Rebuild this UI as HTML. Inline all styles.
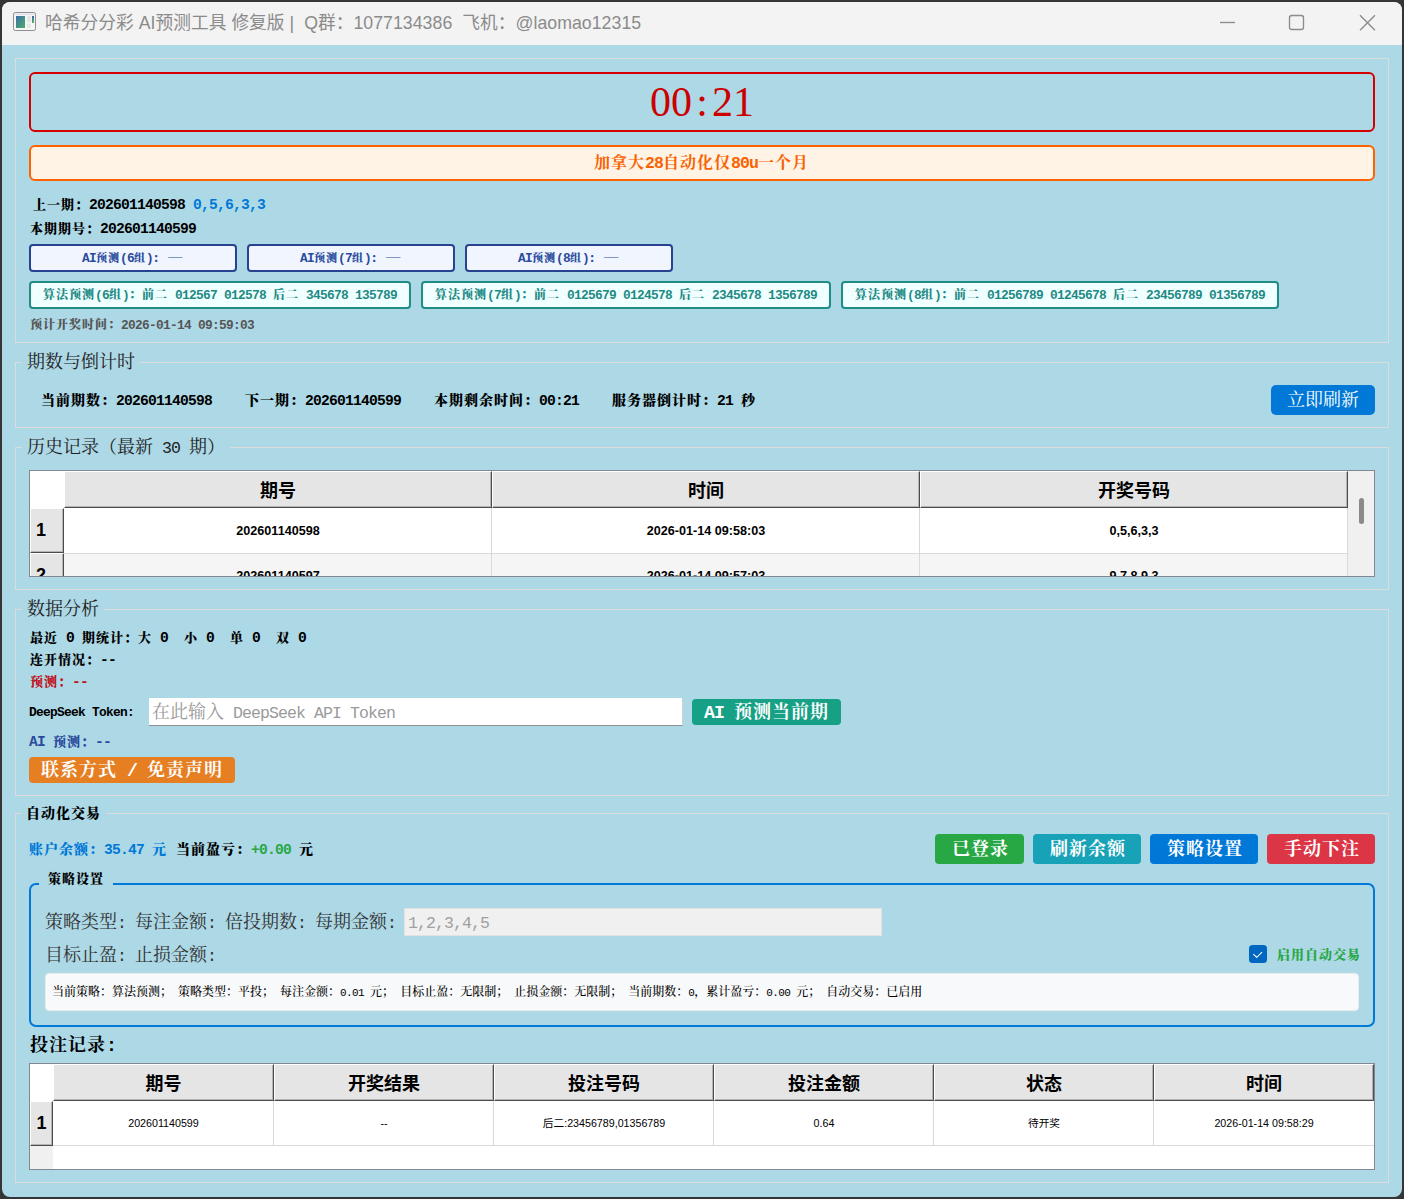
<!DOCTYPE html>
<html lang="zh-CN"><head><meta charset="utf-8"><title>哈希分分彩 AI预测工具 修复版</title>
<style>
html,body{margin:0;padding:0}
body{width:1404px;height:1199px;overflow:hidden;background:#353535;position:relative;font-family:"Liberation Serif","Noto Serif CJK SC",serif}
#win{position:absolute;left:2px;top:2px;width:1400px;height:1195px;border-radius:8px;background:#add8e6;overflow:hidden}
#tb{position:absolute;left:0;top:0;width:1400px;height:43px;background:#f3f3f3}
.b{position:absolute;box-sizing:border-box}
.t{position:absolute;white-space:pre;font-family:"Liberation Serif","Noto Serif CJK SC",serif}
.a{font-family:"Liberation Mono",monospace}
.s{font-family:"Liberation Sans","Noto Sans CJK SC",sans-serif}
.hd{position:absolute;box-sizing:border-box;background:#e5e5e5;border-top:1px solid #fff;border-left:1px solid #fff;border-right:1px solid #4c4c4c;border-bottom:1px solid #4c4c4c;box-shadow:inset -1px -1px 0 #b4b4b4;font-family:"Liberation Sans","Noto Sans CJK SC",sans-serif;font-weight:700;font-size:18px;text-align:center;color:#000}
.c{position:absolute;box-sizing:border-box;font-family:"Liberation Sans","Noto Sans CJK SC",sans-serif;text-align:center;color:#000;white-space:pre}
</style></head><body>
<div id="win"><div id="tb"></div></div>
<div id="ui" style="position:absolute;left:0;top:0;width:1404px;height:1199px">

<svg class="b" style="left:12px;top:11px" width="26" height="22" viewBox="0 0 26 22">
<defs><linearGradient id="g1" x1="0" y1="0" x2="1" y2="1"><stop offset="0" stop-color="#3b6ea8"/><stop offset="1" stop-color="#4fae6a"/></linearGradient>
<linearGradient id="g2" x1="0" y1="0" x2="0" y2="1"><stop offset="0" stop-color="#3565b0"/><stop offset="1" stop-color="#5ab860"/></linearGradient></defs>
<rect x="1.5" y="1.5" width="22" height="18" rx="1.8" fill="#f6f6f6" stroke="#8e8e93" stroke-width="1"/>
<rect x="2.5" y="2.5" width="20" height="1.6" fill="#dde2ea"/>
<rect x="4" y="5" width="9" height="12" fill="url(#g1)"/>
<rect x="15" y="5" width="4" height="6" fill="#e6e6e6"/>
<rect x="15" y="12.5" width="4" height="4.5" fill="#e9e9e9"/>
<rect x="20" y="5" width="2" height="7" fill="url(#g2)"/>
</svg>
<div class="t s" style="left:45px;top:11px;font-size:17.7px;line-height:24px;color:#8b8b8b;letter-spacing:0.05px" id="ttl">哈希分分彩 AI预测工具 修复版 |  Q群：1077134386  飞机：@laomao12315</div>
<svg class="b" style="left:1215px;top:10px" width="170" height="26" viewBox="0 0 170 26">
<path d="M5 12.5H20" stroke="#8c8c8c" stroke-width="1.35" fill="none"/>
<rect x="74.5" y="5.5" width="14" height="14" rx="2.2" fill="none" stroke="#8c8c8c" stroke-width="1.35"/>
<path d="M145 5.2L160 20.2M160 5.2L145 20.2" stroke="#8c8c8c" stroke-width="1.35" fill="none"/>
</svg>
<div class="b" style="left:15px;top:58px;width:1374px;height:285px;border:1px solid #dcdcdc;box-sizing:border-box"></div>
<div class="b" style="left:29px;top:72px;width:1346px;height:60px;border:2px solid #d40000;border-radius:6px"></div>
<div class="t" style="left:29px;top:72px;width:1346px;height:60px;line-height:60px;text-align:center;font-size:42px;color:#cc0000;font-family:'Liberation Serif',serif" id="timer">00<span style="display:inline-block;width:20px;text-align:center">:</span>21</div>
<div class="b" style="left:29px;top:145px;width:1346px;height:36px;border:2px solid #ff6200;border-radius:6px;background:#fff3e6"></div>
<div class="t" style="left:594px;top:152px;font-size:16px;letter-spacing:1px;line-height:22px;height:22px;font-weight:700;color:#f86200;">加拿大<span class="a" style="font-size:16.50px;letter-spacing:-0.90px;font-weight:700">28</span>自动化仅<span class="a" style="font-size:16.50px;letter-spacing:-0.90px;font-weight:700">80u</span>一个月</div>
<div class="t" style="left:33px;top:195px;font-size:13px;letter-spacing:1px;line-height:20px;height:20px;font-weight:900;color:#000;">上一期：<span class="a" style="font-size:14.67px;letter-spacing:-0.80px;font-weight:700">202601140598 </span></div>
<div class="t" style="left:193px;top:195px;font-size:13px;letter-spacing:1px;line-height:20px;height:20px;font-weight:900;color:#0078d7;"><span class="a" style="font-size:14.67px;letter-spacing:-0.80px;font-weight:700">0,5,6,3,3</span></div>
<div class="t" style="left:30px;top:219px;font-size:13px;letter-spacing:1px;line-height:20px;height:20px;font-weight:900;color:#000;">本期期号：<span class="a" style="font-size:14.67px;letter-spacing:-0.80px;font-weight:700">202601140599</span></div>
<div class="b" style="left:29px;top:244px;width:208px;height:28px;border:2px solid #27428f;border-radius:4px;background:#f0f5ff"></div>
<div class="t" style="left:82px;top:249px;font-size:11px;letter-spacing:1px;line-height:18px;height:18px;font-weight:900;color:#2a4b9b;"><span class="a" style="font-size:12.83px;letter-spacing:-0.70px;font-weight:700">AI</span>预测<span class="a" style="font-size:12.83px;letter-spacing:-0.70px;font-weight:700">(6</span>组<span class="a" style="font-size:12.83px;letter-spacing:-0.70px;font-weight:700">)</span>：</div>
<div class="t" style="left:168px;top:247px;font-size:11px;letter-spacing:1px;line-height:18px;height:18px;font-weight:400;color:#2a4b9b;transform:scaleX(1.3);transform-origin:0 0;">—</div>
<div class="b" style="left:247px;top:244px;width:208px;height:28px;border:2px solid #27428f;border-radius:4px;background:#f0f5ff"></div>
<div class="t" style="left:300px;top:249px;font-size:11px;letter-spacing:1px;line-height:18px;height:18px;font-weight:900;color:#2a4b9b;"><span class="a" style="font-size:12.83px;letter-spacing:-0.70px;font-weight:700">AI</span>预测<span class="a" style="font-size:12.83px;letter-spacing:-0.70px;font-weight:700">(7</span>组<span class="a" style="font-size:12.83px;letter-spacing:-0.70px;font-weight:700">)</span>：</div>
<div class="t" style="left:386px;top:247px;font-size:11px;letter-spacing:1px;line-height:18px;height:18px;font-weight:400;color:#2a4b9b;transform:scaleX(1.3);transform-origin:0 0;">—</div>
<div class="b" style="left:465px;top:244px;width:208px;height:28px;border:2px solid #27428f;border-radius:4px;background:#f0f5ff"></div>
<div class="t" style="left:518px;top:249px;font-size:11px;letter-spacing:1px;line-height:18px;height:18px;font-weight:900;color:#2a4b9b;"><span class="a" style="font-size:12.83px;letter-spacing:-0.70px;font-weight:700">AI</span>预测<span class="a" style="font-size:12.83px;letter-spacing:-0.70px;font-weight:700">(8</span>组<span class="a" style="font-size:12.83px;letter-spacing:-0.70px;font-weight:700">)</span>：</div>
<div class="t" style="left:604px;top:247px;font-size:11px;letter-spacing:1px;line-height:18px;height:18px;font-weight:400;color:#2a4b9b;transform:scaleX(1.3);transform-origin:0 0;">—</div>
<div class="b" style="left:29px;top:281px;width:382px;height:28px;border:2px solid #1f8c86;border-radius:4px;background:#f0ffff"></div>
<div class="t" style="left:43px;top:286px;font-size:12px;letter-spacing:1px;line-height:18px;height:18px;font-weight:900;color:#1f8a84;">算法预测<span class="a" style="font-size:12.83px;letter-spacing:-0.70px;font-weight:700">(6</span>组<span class="a" style="font-size:12.83px;letter-spacing:-0.70px;font-weight:700">)</span>：前二<span class="a" style="font-size:12.83px;letter-spacing:-0.70px;font-weight:700"> 012567 012578 </span>后二<span class="a" style="font-size:12.83px;letter-spacing:-0.70px;font-weight:700"> 345678 135789</span></div>
<div class="b" style="left:421px;top:281px;width:410px;height:28px;border:2px solid #1f8c86;border-radius:4px;background:#f0ffff"></div>
<div class="t" style="left:435px;top:286px;font-size:12px;letter-spacing:1px;line-height:18px;height:18px;font-weight:900;color:#1f8a84;">算法预测<span class="a" style="font-size:12.83px;letter-spacing:-0.70px;font-weight:700">(7</span>组<span class="a" style="font-size:12.83px;letter-spacing:-0.70px;font-weight:700">)</span>：前二<span class="a" style="font-size:12.83px;letter-spacing:-0.70px;font-weight:700"> 0125679 0124578 </span>后二<span class="a" style="font-size:12.83px;letter-spacing:-0.70px;font-weight:700"> 2345678 1356789</span></div>
<div class="b" style="left:841px;top:281px;width:438px;height:28px;border:2px solid #1f8c86;border-radius:4px;background:#f0ffff"></div>
<div class="t" style="left:855px;top:286px;font-size:12px;letter-spacing:1px;line-height:18px;height:18px;font-weight:900;color:#1f8a84;">算法预测<span class="a" style="font-size:12.83px;letter-spacing:-0.70px;font-weight:700">(8</span>组<span class="a" style="font-size:12.83px;letter-spacing:-0.70px;font-weight:700">)</span>：前二<span class="a" style="font-size:12.83px;letter-spacing:-0.70px;font-weight:700"> 01256789 01245678 </span>后二<span class="a" style="font-size:12.83px;letter-spacing:-0.70px;font-weight:700"> 23456789 01356789</span></div>
<div class="t" style="left:30px;top:316px;font-size:12px;letter-spacing:1px;line-height:18px;height:18px;font-weight:900;color:#555;">预计开奖时间：<span class="a" style="font-size:12.83px;letter-spacing:-0.70px;font-weight:700">2026-01-14 09:59:03</span></div>
<div class="b" style="left:15px;top:362px;width:1374px;height:66px;border:1px solid #dcdcdc;box-sizing:border-box"></div>
<div class="b" style="left:22px;top:362px;width:117px;height:1px;background:#add8e6"></div>
<div class="t" style="left:27px;top:350px;font-size:18px;letter-spacing:0px;line-height:24px;height:24px;font-weight:400;color:#222;">期数与倒计时</div>
<div class="t" style="left:41px;top:389px;font-size:14px;letter-spacing:1px;line-height:24px;height:24px;font-weight:900;color:#000;">当前期数：<span class="a" style="font-size:14.67px;letter-spacing:-0.80px;font-weight:700">202601140598</span></div>
<div class="t" style="left:245px;top:389px;font-size:14px;letter-spacing:1px;line-height:24px;height:24px;font-weight:900;color:#000;">下一期：<span class="a" style="font-size:14.67px;letter-spacing:-0.80px;font-weight:700">202601140599</span></div>
<div class="t" style="left:434px;top:389px;font-size:14px;letter-spacing:1px;line-height:24px;height:24px;font-weight:900;color:#000;">本期剩余时间：<span class="a" style="font-size:14.67px;letter-spacing:-0.80px;font-weight:700">00:21</span></div>
<div class="t" style="left:612px;top:389px;font-size:14px;letter-spacing:1px;line-height:24px;height:24px;font-weight:900;color:#000;">服务器倒计时：<span class="a" style="font-size:14.67px;letter-spacing:-0.80px;font-weight:700">21 </span>秒</div>
<div class="b" style="left:1271px;top:385px;width:104px;height:30px;background:#0078d7;border-radius:5px"></div>
<div class="t" style="left:1287px;top:388px;font-size:18px;letter-spacing:0px;line-height:24px;height:24px;font-weight:400;color:#fff;">立即刷新</div>
<div class="b" style="left:15px;top:447px;width:1374px;height:143px;border:1px solid #dcdcdc;box-sizing:border-box"></div>
<div class="b" style="left:22px;top:447px;width:208px;height:1px;background:#add8e6"></div>
<div class="t" style="left:27px;top:435px;font-size:18px;letter-spacing:0px;line-height:24px;height:24px;font-weight:400;color:#222;">历史记录（最新<span class="a" style="font-size:16.50px;letter-spacing:-0.90px;font-weight:400"> 30 </span>期）</div>
<div class="b" style="left:29px;top:470px;width:1346px;height:107px;border:1px solid #828790;background:#fff;overflow:hidden">
<div class="hd" style="left:34px;top:0;width:428px;height:37px;line-height:39px">期号</div>
<div class="hd" style="left:462px;top:0;width:428px;height:37px;line-height:39px">时间</div>
<div class="hd" style="left:890px;top:0;width:428px;height:37px;line-height:39px">开奖号码</div>
<div class="hd" style="left:0;top:37px;width:34px;height:45px;line-height:42px;text-align:left;padding-left:5px">1</div>
<div class="hd" style="left:0;top:82px;width:34px;height:45px;line-height:42px;text-align:left;padding-left:5px">2</div>
<div class="b" style="left:34px;top:82px;width:1284px;height:30px;background:#f5f5f5;border-top:1px solid #d9d9d9"></div>
<div class="b" style="left:461px;top:37px;width:1px;height:80px;background:#d9d9d9"></div>
<div class="b" style="left:889px;top:37px;width:1px;height:80px;background:#d9d9d9"></div>
<div class="b" style="left:1317px;top:37px;width:1px;height:80px;background:#d9d9d9"></div>
<div class="c" style="left:34px;top:37px;width:428px;height:45px;line-height:47px;font-size:12.6px;font-weight:700">202601140598</div>
<div class="c" style="left:462px;top:37px;width:428px;height:45px;line-height:47px;font-size:12.6px;font-weight:700">2026-01-14 09:58:03</div>
<div class="c" style="left:890px;top:37px;width:428px;height:45px;line-height:47px;font-size:12.6px;font-weight:700">0,5,6,3,3</div>
<div class="c" style="left:34px;top:82px;width:428px;height:45px;line-height:47px;font-size:12.6px;font-weight:700">202601140597</div>
<div class="c" style="left:462px;top:82px;width:428px;height:45px;line-height:47px;font-size:12.6px;font-weight:700">2026-01-14 09:57:03</div>
<div class="c" style="left:890px;top:82px;width:428px;height:45px;line-height:47px;font-size:12.6px;font-weight:700">9,7,8,9,3</div>
<div class="b" style="left:1318px;top:0;width:26px;height:105px;background:#f0f0f0"></div>
<div class="b" style="left:1329px;top:27px;width:5px;height:26px;background:#8a8a8a;border-radius:3px"></div>
</div>
<div class="b" style="left:15px;top:609px;width:1374px;height:187px;border:1px solid #dcdcdc;box-sizing:border-box"></div>
<div class="b" style="left:22px;top:609px;width:82px;height:1px;background:#add8e6"></div>
<div class="t" style="left:27px;top:597px;font-size:18px;letter-spacing:0px;line-height:24px;height:24px;font-weight:400;color:#222;">数据分析</div>
<div class="t" style="left:30px;top:628px;font-size:13px;letter-spacing:1px;line-height:20px;height:20px;font-weight:900;color:#000;">最近<span class="a" style="font-size:14.67px;letter-spacing:-0.80px;font-weight:700"> 0 </span>期统计：大<span class="a" style="font-size:14.67px;letter-spacing:-0.80px;font-weight:700"> 0 &nbsp;</span>小<span class="a" style="font-size:14.67px;letter-spacing:-0.80px;font-weight:700"> 0 &nbsp;</span>单<span class="a" style="font-size:14.67px;letter-spacing:-0.80px;font-weight:700"> 0 &nbsp;</span>双<span class="a" style="font-size:14.67px;letter-spacing:-0.80px;font-weight:700"> 0</span></div>
<div class="t" style="left:30px;top:650px;font-size:13px;letter-spacing:1px;line-height:20px;height:20px;font-weight:900;color:#000;">连开情况：<span class="a" style="font-size:14.67px;letter-spacing:-0.80px;font-weight:700">--</span></div>
<div class="t" style="left:30px;top:672px;font-size:13px;letter-spacing:1px;line-height:20px;height:20px;font-weight:900;color:#c0141f;">预测：<span class="a" style="font-size:14.67px;letter-spacing:-0.80px;font-weight:700">--</span></div>
<div class="t" style="left:29px;top:702px;font-size:12px;letter-spacing:1px;line-height:20px;height:20px;font-weight:900;color:#000;"><span class="a" style="font-size:12.83px;letter-spacing:-0.70px;font-weight:700">DeepSeek Token:</span></div>
<div class="b" style="left:149px;top:698px;width:534px;height:28px;background:#fff;border-bottom:1px solid #8f8f8f;border-right:1px solid #d0d0d0"></div>
<div class="t" style="left:152px;top:700px;font-size:18px;letter-spacing:0px;line-height:24px;height:24px;font-weight:400;color:#9a9a9a;">在此输入<span class="a" style="font-size:16.50px;letter-spacing:-0.90px;font-weight:400"> DeepSeek API Token</span></div>
<div class="b" style="left:692px;top:699px;width:149px;height:26px;background:#16a085;border-radius:4px"></div>
<div class="t" style="left:704px;top:700px;font-size:18px;letter-spacing:1px;line-height:24px;height:24px;font-weight:700;color:#fff;"><span class="a" style="font-size:18.33px;letter-spacing:-1.00px;font-weight:700">AI </span>预测当前期</div>
<div class="t" style="left:29px;top:732px;font-size:13px;letter-spacing:1px;line-height:20px;height:20px;font-weight:900;color:#2a4b9b;"><span class="a" style="font-size:14.67px;letter-spacing:-0.80px;font-weight:700">AI </span>预测：<span class="a" style="font-size:14.67px;letter-spacing:-0.80px;font-weight:700">--</span></div>
<div class="b" style="left:29px;top:757px;width:206px;height:26px;background:#e67e22;border-radius:4px"></div>
<div class="t" style="left:41px;top:758px;font-size:18px;letter-spacing:1px;line-height:24px;height:24px;font-weight:700;color:#fff;">联系方式<span class="a" style="font-size:18.33px;letter-spacing:-1.00px;font-weight:700"> / </span>免责声明</div>
<div class="b" style="left:15px;top:813px;width:1374px;height:370px;border:1px solid #dcdcdc;box-sizing:border-box"></div>
<div class="b" style="left:22px;top:813px;width:84px;height:1px;background:#add8e6"></div>
<div class="t" style="left:26px;top:803px;font-size:14px;letter-spacing:1px;line-height:22px;height:22px;font-weight:900;color:#000;">自动化交易</div>
<div class="t" style="left:29px;top:839px;font-size:14px;letter-spacing:1px;line-height:22px;height:22px;font-weight:900;color:#0078d7;">账户余额：<span class="a" style="font-size:14.67px;letter-spacing:-0.80px;font-weight:700">35.47 </span>元</div>
<div class="t" style="left:176px;top:839px;font-size:14px;letter-spacing:1px;line-height:22px;height:22px;font-weight:900;color:#000;">当前盈亏：</div>
<div class="t" style="left:251px;top:839px;font-size:14px;letter-spacing:1px;line-height:22px;height:22px;font-weight:900;color:#28a745;"><span class="a" style="font-size:14.67px;letter-spacing:-0.80px;font-weight:700">+0.00</span></div>
<div class="t" style="left:299px;top:839px;font-size:14px;letter-spacing:1px;line-height:22px;height:22px;font-weight:900;color:#000;">元</div>
<div class="b" style="left:935px;top:834px;width:89px;height:30px;background:#28a745;border-radius:4px"></div>
<div class="t" style="left:952px;top:837px;font-size:18px;letter-spacing:1px;line-height:24px;height:24px;font-weight:700;color:#fff;">已登录</div>
<div class="b" style="left:1033px;top:834px;width:108px;height:30px;background:#17a2b8;border-radius:4px"></div>
<div class="t" style="left:1050px;top:837px;font-size:18px;letter-spacing:1px;line-height:24px;height:24px;font-weight:700;color:#fff;">刷新余额</div>
<div class="b" style="left:1150px;top:834px;width:108px;height:30px;background:#0078d7;border-radius:4px"></div>
<div class="t" style="left:1167px;top:837px;font-size:18px;letter-spacing:1px;line-height:24px;height:24px;font-weight:700;color:#fff;">策略设置</div>
<div class="b" style="left:1267px;top:834px;width:108px;height:30px;background:#dc3545;border-radius:4px"></div>
<div class="t" style="left:1284px;top:837px;font-size:18px;letter-spacing:1px;line-height:24px;height:24px;font-weight:700;color:#fff;">手动下注</div>
<div class="b" style="left:29px;top:883px;width:1346px;height:144px;border:2px solid #0078d7;border-radius:7px"></div>
<div class="b" style="left:39px;top:883px;width:74px;height:2px;background:#add8e6"></div>
<div class="t" style="left:48px;top:869px;font-size:13px;letter-spacing:1px;line-height:20px;height:20px;font-weight:900;color:#000;">策略设置</div>
<div class="t" style="left:45px;top:910px;font-size:18px;letter-spacing:0px;line-height:24px;height:24px;font-weight:400;color:#333;">策略类型<span class="a" style="font-size:16.50px;letter-spacing:-0.90px;font-weight:400">:</span></div>
<div class="t" style="left:135px;top:910px;font-size:18px;letter-spacing:0px;line-height:24px;height:24px;font-weight:400;color:#333;">每注金额<span class="a" style="font-size:16.50px;letter-spacing:-0.90px;font-weight:400">:</span></div>
<div class="t" style="left:225px;top:910px;font-size:18px;letter-spacing:0px;line-height:24px;height:24px;font-weight:400;color:#333;">倍投期数<span class="a" style="font-size:16.50px;letter-spacing:-0.90px;font-weight:400">:</span></div>
<div class="t" style="left:315px;top:910px;font-size:18px;letter-spacing:0px;line-height:24px;height:24px;font-weight:400;color:#333;">每期金额<span class="a" style="font-size:16.50px;letter-spacing:-0.90px;font-weight:400">:</span></div>
<div class="t" style="left:45px;top:943px;font-size:18px;letter-spacing:0px;line-height:24px;height:24px;font-weight:400;color:#333;">目标止盈<span class="a" style="font-size:16.50px;letter-spacing:-0.90px;font-weight:400">:</span></div>
<div class="t" style="left:135px;top:943px;font-size:18px;letter-spacing:0px;line-height:24px;height:24px;font-weight:400;color:#333;">止损金额<span class="a" style="font-size:16.50px;letter-spacing:-0.90px;font-weight:400">:</span></div>
<div class="b" style="left:404px;top:908px;width:478px;height:28px;background:#f0f0f0;border:1px solid #e2e2e2"></div>
<div class="t" style="left:408px;top:910px;font-size:18px;letter-spacing:0px;line-height:24px;height:24px;font-weight:400;color:#a0a0a0;"><span class="a" style="font-size:16.50px;letter-spacing:-0.90px;font-weight:400">1,2,3,4,5</span></div>
<svg class="b" style="left:1249px;top:945px" width="18" height="18" viewBox="0 0 18 18"><rect x="0" y="0" width="18" height="18" rx="3.5" fill="#0067c0"/><path d="M4.6 9.4L7.7 12.4L12.8 7.3" stroke="#fff" stroke-width="1.05" fill="none" stroke-linecap="round" stroke-linejoin="round"/></svg>
<div class="t" style="left:1277px;top:945px;font-size:13px;letter-spacing:1px;line-height:20px;height:20px;font-weight:900;color:#28a745;">启用自动交易</div>
<div class="b" style="left:45px;top:973px;width:1314px;height:38px;background:#f8f9fa;border-radius:4px;border:1px solid #e9ecef"></div>
<div class="t" style="left:52px;top:983px;font-size:12px;letter-spacing:0px;line-height:18px;height:18px;font-weight:500;color:#000;">当前策略：算法预测；<span class="a" style="font-size:11.00px;letter-spacing:-0.60px;font-weight:400"> </span>策略类型：平投；<span class="a" style="font-size:11.00px;letter-spacing:-0.60px;font-weight:400"> </span>每注金额：<span class="a" style="font-size:11.00px;letter-spacing:-0.60px;font-weight:400">0.01 </span>元；<span class="a" style="font-size:11.00px;letter-spacing:-0.60px;font-weight:400"> </span>目标止盈：无限制；<span class="a" style="font-size:11.00px;letter-spacing:-0.60px;font-weight:400"> </span>止损金额：无限制；<span class="a" style="font-size:11.00px;letter-spacing:-0.60px;font-weight:400"> </span>当前期数：<span class="a" style="font-size:11.00px;letter-spacing:-0.60px;font-weight:400">0</span>，累计盈亏：<span class="a" style="font-size:11.00px;letter-spacing:-0.60px;font-weight:400">0.00 </span>元；<span class="a" style="font-size:11.00px;letter-spacing:-0.60px;font-weight:400"> </span>自动交易：已启用</div>
<div class="t" style="left:30px;top:1033px;font-size:18px;letter-spacing:1px;line-height:24px;height:24px;font-weight:700;color:#000;">投注记录<span class="a" style="font-size:18.33px;letter-spacing:-1.00px;font-weight:700">:</span></div>
<div class="b" style="left:29px;top:1063px;width:1346px;height:107px;border:1px solid #828790;background:#fff;overflow:hidden"><div class="hd" style="left:23px;top:0;width:221px;height:37px;line-height:39px">期号</div>
<div class="c" style="left:23px;top:37px;width:221px;height:45px;line-height:45px;font-size:10.7px">202601140599</div>
<div class="b" style="left:243px;top:37px;width:1px;height:45px;background:#d9d9d9"></div>
<div class="hd" style="left:244px;top:0;width:220px;height:37px;line-height:39px">开奖结果</div>
<div class="c" style="left:244px;top:37px;width:220px;height:45px;line-height:45px;font-size:10.7px">--</div>
<div class="b" style="left:463px;top:37px;width:1px;height:45px;background:#d9d9d9"></div>
<div class="hd" style="left:464px;top:0;width:220px;height:37px;line-height:39px">投注号码</div>
<div class="c" style="left:464px;top:37px;width:220px;height:45px;line-height:45px;font-size:10.7px">后二:23456789,01356789</div>
<div class="b" style="left:683px;top:37px;width:1px;height:45px;background:#d9d9d9"></div>
<div class="hd" style="left:684px;top:0;width:220px;height:37px;line-height:39px">投注金额</div>
<div class="c" style="left:684px;top:37px;width:220px;height:45px;line-height:45px;font-size:10.7px">0.64</div>
<div class="b" style="left:903px;top:37px;width:1px;height:45px;background:#d9d9d9"></div>
<div class="hd" style="left:904px;top:0;width:220px;height:37px;line-height:39px">状态</div>
<div class="c" style="left:904px;top:37px;width:220px;height:45px;line-height:45px;font-size:10.7px">待开奖</div>
<div class="b" style="left:1123px;top:37px;width:1px;height:45px;background:#d9d9d9"></div>
<div class="hd" style="left:1124px;top:0;width:220px;height:37px;line-height:39px">时间</div>
<div class="c" style="left:1124px;top:37px;width:220px;height:45px;line-height:45px;font-size:10.7px">2026-01-14 09:58:29</div>
<div class="hd" style="left:0;top:37px;width:23px;height:45px;line-height:42px">1</div>
<div class="b" style="left:23px;top:81px;width:1322px;height:1px;background:#d9d9d9"></div>
<div class="b" style="left:0;top:82px;width:23px;height:24px;background:#f0f0f0"></div>
</div>
</div></body></html>
